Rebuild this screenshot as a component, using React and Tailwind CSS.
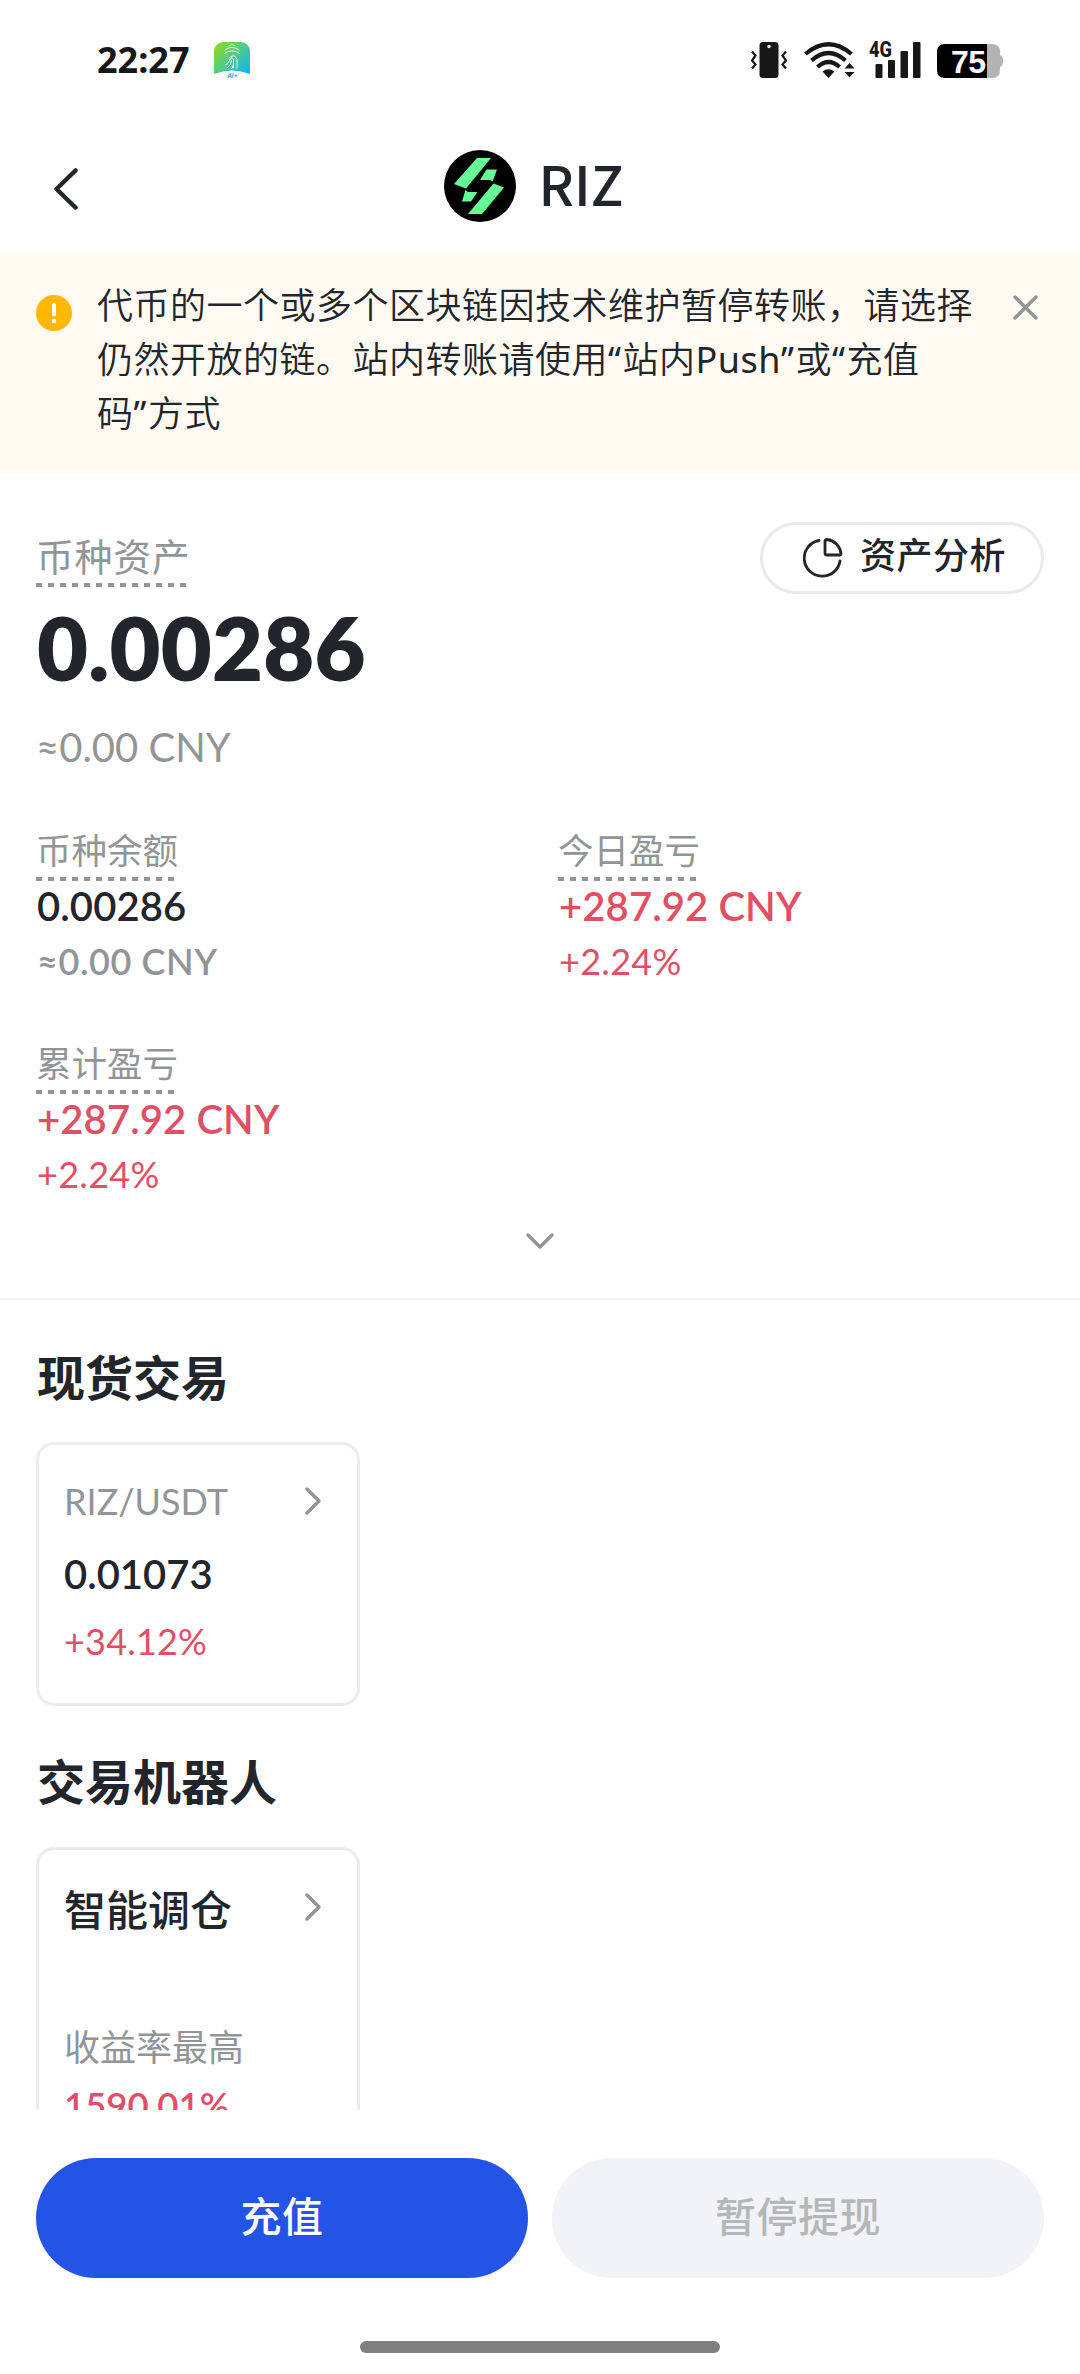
import clsx from 'clsx';

const CJK = "font-['Noto_Sans_CJK_SC',sans-serif]";
const NUM = "font-['Lato','Noto_Sans_CJK_SC',sans-serif]";

const stats = [
  { label: '币种余额', value: '0.00286', sub: '≈0.00 CNY' },
  { label: '今日盈亏', value: '+287.92 CNY', sub: '+2.24%', up: true },
  { label: '累计盈亏', value: '+287.92 CNY', sub: '+2.24%', up: true },
];

function FingerprintApp() {
  return (
    <svg width="36" height="36" viewBox="0 0 36 36" fill="none">
      <defs>
        <linearGradient id="app" x1="4" y1="2" x2="34" y2="30" gradientUnits="userSpaceOnUse">
          <stop stopColor="#8dd62a" />
          <stop offset="0.5" stopColor="#4ccb8e" />
          <stop offset="1" stopColor="#12b4f2" />
        </linearGradient>
      </defs>
      <path d="M0 9a9 9 0 0 1 9-9h18a9 9 0 0 1 9 9v23q-18-7-36 0z" fill="url(#app)" />
      <g stroke="#fff" strokeWidth="1" strokeLinecap="round" opacity="0.9">
        <path d="M15 3.500q3-1.500 6 0M11 8q7-5.500 14 0M10.500 11.500q7.500-5.500 15 0M15 16q5-5 8 1v9M11.500 23q4.500-3 4.500-6q2-2.500 3.500 0v9M13 26q4.500-3 4.500-7.500M17.500 27q1-1 1-3" />
      </g>
      <text x="18.500" y="35.500" textAnchor="middle" fontSize="6" fontStyle="italic" fontWeight="700" fill="#2aa5e0" fontFamily="Inter, sans-serif">AI+</text>
    </svg>
  );
}

function Vibrate() {
  return (
    <svg width="36" height="36" viewBox="0 0 36 36" fill="none">
      <rect x="8.500" width="19" height="36" rx="3.500" fill="#171717" />
      <circle cx="18" cy="4.500" r="1.700" fill="#fff" />
      <path d="M1 9.500l3.500 4L1 18.500l3.500 4L1 26.500M35 9.500l-3.500 4 3.500 5-3.500 4 3.500 4" stroke="#171717" strokeWidth="2.200" />
    </svg>
  );
}

function Wifi() {
  return (
    <svg width="51" height="36" viewBox="0 0 51 36" fill="none">
      <g stroke="#171717" strokeWidth="4.200">
        <path d="M1.500 12Q24.500-7.500 47.500 12" />
        <path d="M7.500 18.500Q24.500 3.500 41.500 18.500" />
        <path d="M13.500 25Q24.500 15 35.500 25" />
      </g>
      <path d="M18.500 29.500q6-4.500 12 0l-6 6.500z" fill="#171717" />
      <path d="M45.500 21l5 5.500h-10zM45.500 35.500l5-5.500h-10z" fill="#171717" />
    </svg>
  );
}

function Signal() {
  return (
    <svg className="overflow-visible" width="52" height="38" viewBox="0 0 52 38" fill="#171717">
      <text x="0" y="17" fontSize="22" fontWeight="800" textLength="23" lengthAdjust="spacingAndGlyphs" fontFamily="Roboto, sans-serif">4G</text>
      <rect x="6.500" y="24" width="7" height="14" rx="1" />
      <rect x="19" y="20" width="7" height="18" rx="1" />
      <rect x="31.500" y="11" width="7.500" height="27" rx="1" />
      <rect x="44" y="2" width="7.500" height="36" rx="1" />
    </svg>
  );
}

function Battery() {
  return (
    <svg className="overflow-visible" width="66" height="34" viewBox="0 0 66 34">
      <path d="M50 0h5q8 0 8 8v3q3 1 3 6t-3 6v3q0 8-8 8h-5z" fill="#b3b3b3" />
      <path d="M8 0h42v34H8q-8 0-8-8V8q0-8 8-8z" fill="#000" />
      <text x="14" y="29" fontSize="32" fontWeight="700" textLength="35" fill="#fff" fontFamily="Liberation Sans, sans-serif">75</text>
    </svg>
  );
}

function RizLogo() {
  return (
    <svg width="72" height="72" viewBox="0 0 72 72">
      <circle cx="36" cy="36" r="36" fill="#000" />
      <g fill="#66ff96">
        <path d="M33 8h14L22 38.500 10 34z" />
        <path d="M42.500 19.500H53L48.500 31.500 46 30H36z" />
        <path d="M49.500 33.500l10.500 4L38 64H24z" />
        <path d="M21.500 40l2.500 2h9.500L27 51.500h-9z" />
      </g>
    </svg>
  );
}

function PieIcon() {
  return (
    <svg width="40" height="40" viewBox="0 0 40 40" fill="none" stroke="#22252b" strokeWidth="2.800" strokeLinecap="round" strokeLinejoin="round">
      <path d="M16 2.500A18 18 0 1 0 37 23" />
      <path d="M24 1.500a16 16 0 0 1 14 14q0 1.500-1.500 1.500H24q-2 0-2-2V3.500q0-2 2-2z" />
    </svg>
  );
}

function ChevronRight() {
  return (
    <svg width="16" height="28" viewBox="0 0 16 28" fill="none" stroke="#929597" strokeWidth="3.400" strokeLinecap="round" strokeLinejoin="round">
      <path d="M2 2l12 12L2 26" />
    </svg>
  );
}

// dotted hint line that sits under tappable labels
function HintLabel({ children, className, lineClass }) {
  return (
    <div className={clsx(CJK, 'flex w-fit flex-col text-[#929597]', className)}>
      <span>{children}</span>
      <span className={clsx('h-1 bg-[repeating-linear-gradient(90deg,#929597_0_6px,transparent_6px_12px)]', lineClass)} />
    </div>
  );
}

function Stat({ label, value, sub, up }) {
  return (
    <div className="h-[213px]">
      <HintLabel className="text-[35.500px] leading-[44px]" lineClass="mt-1.5 w-[138px]">{label}</HintLabel>
      <div className={clsx(NUM, 'mt-px pl-px text-[40px] font-semibold leading-12 tracking-[0.1px]', up ? 'text-[#e04f64]' : 'text-[#22252b]')}>{value}</div>
      <div className={clsx(NUM, 'mt-[11px] pl-px text-[36px] leading-10', up ? 'tracking-[0.3px] text-[#e04f64]' : 'font-semibold tracking-[0.6px] text-[#929597]')}>{sub}</div>
    </div>
  );
}

// latin letters and curly quotes inside the notice
function Latin({ children }) {
  return <span className="font-normal tracking-[1.5px]">{children}</span>;
}

export default function App() {
  return (
    <div className="flex h-[2374px] w-[1080px] flex-col overflow-hidden bg-white text-[#22252b]">
      <div className="flex h-[120px] items-center justify-between pl-[97px] pr-[77px]">
        <div className="flex items-center gap-[24px]">
          <span className="w-[93px] font-['Noto_Sans',sans-serif] text-[36px] font-bold leading-[40px] text-[#171717]">22:27</span>
          <FingerprintApp />
        </div>
        <div className="flex items-center">
          <Vibrate />
          <div className="ml-[17px]"><Wifi /></div>
          <div className="-mt-0.5 ml-[14px]"><Signal /></div>
          <div className="ml-[16px] mt-0.5"><Battery /></div>
        </div>
      </div>

      <header className="grid h-[132px] grid-cols-[1fr_auto_1fr] items-center px-[54px]">
        <svg className="mt-1.5" width="24" height="42" viewBox="0 0 24 42" fill="none" stroke="#22252b" strokeWidth="4.500" strokeLinecap="round" strokeLinejoin="round">
          <path d="M21.500 2.500L2.500 21l19 18.500" />
        </svg>
        <div className="flex items-center gap-[23px] pr-[13px]">
          <RizLogo />
          <span className={clsx(CJK, 'pb-1.5 text-[54px] font-medium leading-[60px]')}>RIZ</span>
        </div>
      </header>

      <div className="flex h-[222px] items-start bg-[#fffaf2] px-9 pt-6">
        <svg className="mt-[19px]" width="36" height="36" viewBox="0 0 36 36">
          <circle cx="18" cy="18" r="18" fill="#ffb700" />
          <path d="M18 10v9.500" stroke="#fff" strokeWidth="4" strokeLinecap="round" />
          <circle cx="18" cy="26" r="2.300" fill="#fff" />
        </svg>
        <p className="ml-[25px] mt-[3px] w-[900px] font-['Noto_Sans','Noto_Sans_CJK_SC',sans-serif] text-[36px] font-[350] leading-[54px] tracking-[0.5px]">
          代币的一个或多个区块链因技术维护暂停转账，请选择<br />
          仍然开放的链。站内转账请使用<Latin>“</Latin>站内<span className="font-normal">Push</span><Latin>”</Latin>或<Latin>“</Latin>充值<br />
          码<Latin>”</Latin>方式
        </p>
        <svg className="mt-[19px] ml-[16px]" width="25" height="25" viewBox="0 0 25 25" stroke="#929597" strokeWidth="3.400" strokeLinecap="round">
          <path d="M2 2l21 21M23 2L2 23" />
        </svg>
      </div>

      <section className="flex h-[826px] flex-col border-b-2 border-[#f1f2f3] px-9 pt-12">
        <div className="flex h-[77px] justify-between">
          <HintLabel className="pt-[9px] text-[38px] leading-12 tracking-[0.6px]" lineClass="mt-1 w-[151px]">币种资产</HintLabel>
          <button className="flex h-[72px] w-[284px] items-center rounded-full border-[3px] border-[#e9eaec] pl-10">
            <PieIcon />
            <span className={clsx(CJK, 'ml-[17px] pb-2.5 text-[36px] font-medium leading-10 tracking-[0.5px]')}>资产分析</span>
          </button>
        </div>
        <div className={clsx(NUM, 'pl-px text-[88px] font-extrabold leading-24 tracking-[0.2px]')}>0.00286</div>
        <div className={clsx(NUM, 'mt-7 text-[40px] leading-12 text-[#929597]')}>≈0.00 CNY</div>
        <div className="mt-14 grid grid-cols-[522px_1fr]">
          {stats.map((s) => <Stat key={s.label} {...s} />)}
        </div>
        <svg className="-mt-[20px] self-center" width="28" height="16" viewBox="0 0 28 16" fill="none" stroke="#929597" strokeWidth="3.400" strokeLinecap="round" strokeLinejoin="round">
          <path d="M2 2l12 12L26 2" />
        </svg>
      </section>

      <div className="h-[810px] overflow-hidden px-9 pt-[45px]">
        <h2 className={clsx(CJK, 'pl-px text-[48px] font-bold leading-[60px]')}>现货交易</h2>
        <div className="mt-[37px] h-[264px] w-[324px] rounded-[18px] border-[3px] border-[#ececed] px-[25px] pt-[33px]">
          <div className="flex items-center justify-between pr-[11px]">
            <span className={clsx(NUM, 'text-[36px] leading-[46px] text-[#929597]')}>RIZ/USDT</span>
            <ChevronRight />
          </div>
          <div className={clsx(NUM, 'mt-[26px] text-[40px] font-semibold leading-[48px]')}>0.01073</div>
          <div className={clsx(NUM, 'mt-[23px] text-[36px] leading-[40px] tracking-[0.2px] text-[#e04f64]')}>+34.12%</div>
        </div>

        <h2 className={clsx(CJK, 'mt-[43px] pl-px text-[48px] font-bold leading-[60px]')}>交易机器人</h2>
        <div className="mt-[38px] h-[400px] w-[324px] rounded-[18px] border-[3px] border-[#ececed] px-[25px] pt-[33px]">
          <div className="flex items-center justify-between pr-[11px]">
            <span className={clsx(CJK, 'text-[42px] font-medium leading-[50px]')}>智能调仓</span>
            <div className="pb-[3px]"><ChevronRight /></div>
          </div>
          <div className={clsx(CJK, 'mt-[92px] text-[36px] leading-[40px] text-[#929597]')}>收益率最高</div>
          <div className={clsx(NUM, 'mt-[16px] text-[36.500px] font-semibold leading-[48px] text-[#e04f64]')}>1590.01%</div>
        </div>
      </div>

      <footer className="flex grow flex-col items-center px-9 pt-12">
        <div className={clsx(CJK, 'flex h-[120px] w-full gap-6 text-[41px] font-medium tracking-[0.5px]')}>
          <button className="flex-1 rounded-full bg-[#2354e6] pb-1.5 text-white">充值</button>
          <button className="flex-1 rounded-full bg-[#f1f3f6] pb-1.5 text-[#b4b6b9]">暂停提现</button>
        </div>
        <div className="mt-[63px] h-3 w-[360px] rounded-full bg-[#808080]" />
      </footer>
    </div>
  );
}
